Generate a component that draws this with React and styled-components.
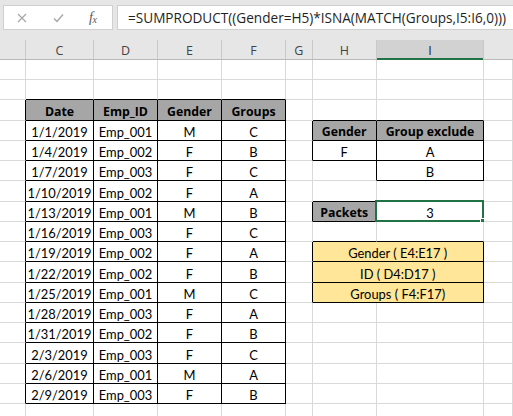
import React from 'react';
import styled, { createGlobalStyle } from 'styled-components';

const GlobalStyle = createGlobalStyle`
  html, body { margin: 0; padding: 0; background: #ffffff; }
  body { overflow: hidden; }
`;

const TEMPLATE = '26px 68px 64px 64px 64px 26.5px 64.5px 107px 1fr';
const ROW_H = 20.24;
const ROWS = 18;
const NCOLS = 9;
const COL_LABELS = ['', 'C', 'D', 'E', 'F', 'G', 'H', 'I', ''];
const SELECTED_COL = 7;

const Page = styled.div`
  width: 513px;
  height: 416px;
  overflow: hidden;
  background: #ffffff;
  font-family: Lato, "Open Sans", sans-serif;
`;

const FormulaArea = styled.div`
  height: 40px;
  box-sizing: border-box;
  background: #e6e6e6;
  padding: 5px 0 0 3px;
  display: flex;
  align-items: flex-start;
  gap: 4px;
`;

const IconBox = styled.div`
  width: 110px;
  height: 25px;
  box-sizing: border-box;
  background: #ffffff;
  border: 1px solid #d0d0d0;
  display: flex;
  align-items: center;
  padding-left: 13px;
`;

const IconSlot = styled.div`
  width: ${p => p.$w}px;
  height: 23px;
  display: flex;
  align-items: center;
`;

const Fx = styled.span`
  font-family: "Liberation Serif", "DejaVu Serif", serif;
  font-style: italic;
  font-size: 14px;
  color: #5a5a5a;
  letter-spacing: -0.5px;
  line-height: 1;
  & > sub {
    font-size: 10px;
    vertical-align: -1px;
  }
`;

const FormulaInput = styled.div`
  flex: 1;
  height: 25px;
  box-sizing: border-box;
  background: #ffffff;
  border: 1px solid #d0d0d0;
  border-right: none;
  display: flex;
  align-items: center;
  padding-left: 10px;
  font-family: "Open Sans", sans-serif;
  font-size: 13.6px;
  color: #1f1f1f;
  white-space: nowrap;
  overflow: hidden;
`;

const HeaderRow = styled.div`
  display: grid;
  grid-template-columns: ${TEMPLATE};
  height: 20px;
  box-sizing: border-box;
  background: #e6e6e6;
  border-bottom: 1px solid #b9b9b9;
`;

const ColHead = styled.div`
  box-sizing: border-box;
  border-right: 1px solid ${p => (p.$last ? 'transparent' : '#c9c9c9')};
  background: ${p => (p.$selected ? '#d2d2d2' : 'transparent')};
  box-shadow: ${p => (p.$selected ? 'inset 0 -2px 0 #217346' : 'none')};
  margin-bottom: ${p => (p.$selected ? '-1px' : '0')};
  display: flex;
  align-items: center;
  justify-content: center;
  font-family: "Open Sans", sans-serif;
  font-size: 12.5px;
  color: ${p => (p.$selected ? '#262626' : '#444444')};
  padding-top: 1px;
`;

const Sheet = styled.div`
  display: grid;
  grid-template-columns: ${TEMPLATE};
  grid-auto-rows: ${ROW_H}px;
`;

const BG = { head: '#a6a6a6', data: '#ffffff', note: '#ffe699' };

const Cell = styled.div`
  position: relative;
  box-sizing: border-box;
  grid-column: span ${p => p.$span || 1};
  border-right: 1px solid ${p => (p.$right ? '#000000' : '#d9d9d9')};
  border-bottom: 1px solid ${p => (p.$bottom ? '#000000' : '#d9d9d9')};
  background: ${p => BG[p.$kind] || '#ffffff'};
  display: flex;
  align-items: flex-end;
  justify-content: center;
  font-family: ${p => (p.$kind === 'head' ? '"Open Sans", Lato, sans-serif' : 'Lato, "Open Sans", sans-serif')};
  font-weight: ${p => (p.$kind === 'head' ? 700 : 400)};
  font-size: ${p => (p.$kind === 'head' ? '12.3px' : '12.9px')};
  line-height: 15px;
  padding-bottom: ${p => (p.$kind === 'head' ? '1px' : '0')};
  color: #000000;
  white-space: nowrap;
`;

const Selection = styled.div`
  position: absolute;
  left: -2px;
  top: -2px;
  right: -1px;
  bottom: -1px;
  border: 2px solid #217346;
  pointer-events: none;
`;

const Handle = styled.div`
  position: absolute;
  right: -4px;
  bottom: -4px;
  width: 6px;
  height: 6px;
  box-sizing: border-box;
  background: #217346;
  border: 1px solid #ffffff;
`;

const tableRows = [
  ['1/1/2019', 'Emp_001', 'M', 'C'],
  ['1/4/2019', 'Emp_002', 'F', 'B'],
  ['1/7/2019', 'Emp_003', 'F', 'C'],
  ['1/10/2019', 'Emp_002', 'F', 'A'],
  ['1/13/2019', 'Emp_001', 'M', 'B'],
  ['1/16/2019', 'Emp_003', 'F', 'C'],
  ['1/19/2019', 'Emp_002', 'F', 'A'],
  ['1/22/2019', 'Emp_002', 'F', 'B'],
  ['1/25/2019', 'Emp_001', 'M', 'C'],
  ['1/28/2019', 'Emp_003', 'F', 'A'],
  ['1/31/2019', 'Emp_002', 'F', 'B'],
  ['2/3/2019', 'Emp_003', 'F', 'C'],
  ['2/6/2019', 'Emp_001', 'M', 'A'],
  ['2/9/2019', 'Emp_003', 'F', 'B'],
];

const cells = {};
const covered = {};
const put = (r, c, v) => {
  cells[`${r}-${c}`] = v;
  for (let k = 1; k < (v.span || 1); k++) covered[`${r}-${c + k}`] = true;
};
['Date', 'Emp_ID', 'Gender', 'Groups'].forEach((t, i) => put(3, 1 + i, { text: t, kind: 'head' }));
tableRows.forEach((row, i) => row.forEach((t, j) => put(4 + i, 1 + j, { text: t, kind: 'data' })));
put(4, 6, { text: 'Gender', kind: 'head' });
put(4, 7, { text: 'Group exclude', kind: 'head' });
put(5, 6, { text: 'F', kind: 'data' });
put(5, 7, { text: 'A', kind: 'data' });
put(6, 7, { text: 'B', kind: 'data' });
put(8, 6, { text: 'Packets', kind: 'head' });
put(8, 7, { text: '3', kind: 'data', selected: true });
put(10, 6, { text: 'Gender ( E4:E17 )', kind: 'note', span: 2 });
put(11, 6, { text: 'ID ( D4:D17 )', kind: 'note', span: 2 });
put(12, 6, { text: 'Groups ( F4:F17)', kind: 'note', span: 2 });

const bordered = (r, c) => Boolean(cells[`${r}-${c}`] || covered[`${r}-${c}`]);

function CrossIcon() {
  return (
    <svg width="10" height="10" viewBox="0 0 10 10">
      <path d="M1 1 L9 9 M9 1 L1 9" stroke="#a6a6a6" strokeWidth="1.2" fill="none" />
    </svg>
  );
}

function CheckIcon() {
  return (
    <svg width="11" height="10" viewBox="0 0 11 10">
      <path d="M1 5.5 L4 8.5 L10 1.5" stroke="#a6a6a6" strokeWidth="1.4" fill="none" />
    </svg>
  );
}

function SheetGrid() {
  const out = [];
  for (let r = 1; r <= ROWS; r++) {
    for (let c = 0; c < NCOLS; c++) {
      const key = `${r}-${c}`;
      if (covered[key]) continue;
      const cell = cells[key];
      const span = cell?.span || 1;
      const right = bordered(r, c) || bordered(r, c + span);
      const bottom = bordered(r, c) || bordered(r + 1, c);
      out.push(
        <Cell key={key} $span={span} $kind={cell?.kind} $right={right} $bottom={bottom}>
          {cell?.text}
          {cell?.selected && (
            <Selection>
              <Handle />
            </Selection>
          )}
        </Cell>
      );
    }
  }
  return <Sheet>{out}</Sheet>;
}

export default function App() {
  return (
    <Page>
      <GlobalStyle />
      <FormulaArea>
        <IconBox>
          <IconSlot $w={36}><CrossIcon /></IconSlot>
          <IconSlot $w={36}><CheckIcon /></IconSlot>
          <IconSlot $w={20}><Fx>f<sub>x</sub></Fx></IconSlot>
        </IconBox>
        <FormulaInput>=SUMPRODUCT((Gender=H5)*ISNA(MATCH(Groups,I5:I6,0)))</FormulaInput>
      </FormulaArea>
      <HeaderRow>
        {COL_LABELS.map((l, i) => (
          <ColHead key={i} $selected={i === SELECTED_COL} $last={i === NCOLS - 1}>
            {l}
          </ColHead>
        ))}
      </HeaderRow>
      <SheetGrid />
    </Page>
  );
}
